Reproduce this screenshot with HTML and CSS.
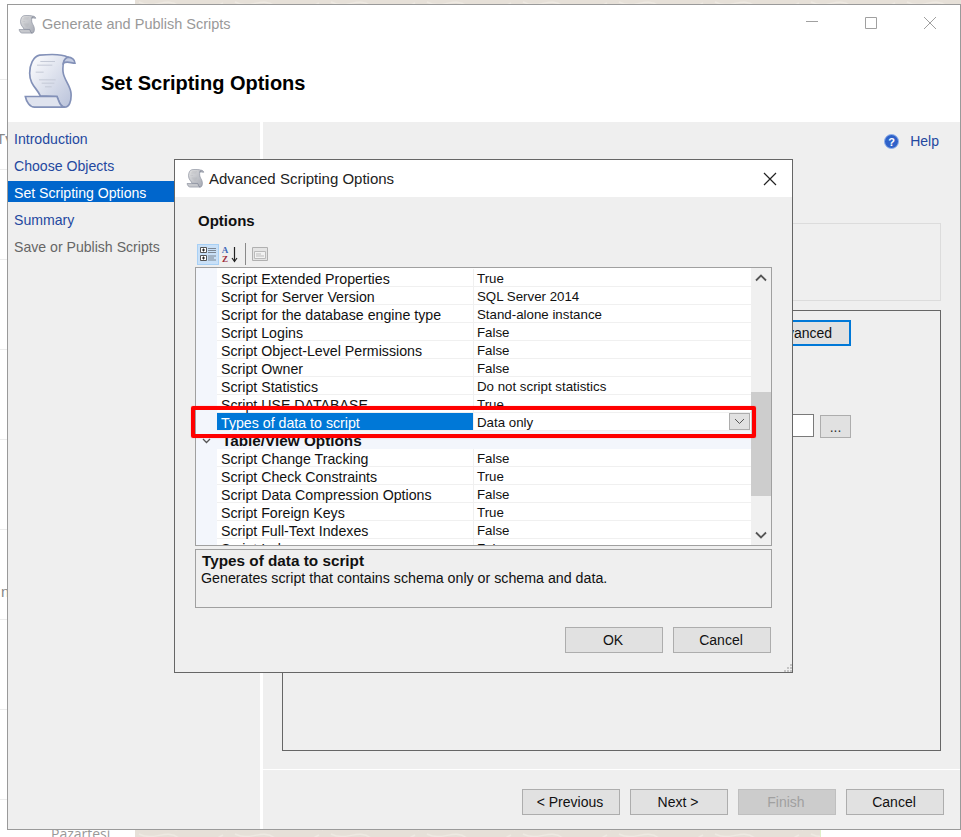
FILE: index.html
```html
<!DOCTYPE html>
<html lang="en">
<head>
    <meta charset="UTF-8">
    <meta name="viewport" content="width=device-width, initial-scale=1.0">
    <title>Generate and Publish Scripts</title>
    <link rel="stylesheet" href="styles.css">
</head>
<body>
    <svg class="defs" width="0" height="0">
        <defs>
            <linearGradient id="paper" x1="0" y1="0" x2="1" y2="1">
                <stop offset="0" stop-color="#ffffff"/>
                <stop offset="1" stop-color="#b9c2da"/>
            </linearGradient>
            <symbol id="scroll" viewBox="70 70 165 170">
                <path d="M120 76C160 72 190 74 205 82C192 88 188 100 190 125C192 150 212 165 214 190C216 215 208 232 195 232C180 232 178 215 172 200L122 198C112 175 90 165 90 130C90 105 100 80 120 76Z" fill="url(#paper)" stroke="#8391b8" stroke-width="5"/>
                <path d="M205 82C216 82 226 90 226 100C214 100 202 92 191 100C192 90 197 85 205 82Z" fill="#c5cde2" stroke="#8391b8" stroke-width="5"/>
                <path d="M77 200L172 200C178 215 182 232 195 232L105 232C90 232 80 215 77 200Z" fill="#dfe3ee" stroke="#8391b8" stroke-width="5"/>
                <path d="M122 95H166M112 106H158M108 127H132M118 150H168M126 160H164M136 171H156" fill="none" stroke="#c4c9d6" stroke-width="3"/>
            </symbol>
            <pattern id="wallpaper" width="96" height="64" patternUnits="userSpaceOnUse">
                <path d="M4 2C20 10 30 -4 44 6S70 14 88 3M10 60C24 52 38 68 52 58S78 50 92 62" fill="none" stroke="#eee9e2" stroke-width="1.500"/>
            </pattern>
        </defs>
    </svg>

    <!-- bits of the web page behind the wizard -->
    <svg class="behind-pattern" width="826" height="837"><rect width="826" height="837" fill="url(#wallpaper)"/></svg>
    <span class="behind behind-tv">Tv</span>
    <span class="behind behind-n">n</span>
    <span class="behind behind-day">Pazartesi</span>
    <div class="behind-corner"></div>

    <div class="wizard">
        <div class="wizard-header">
            <div class="titlebar">
                <svg class="icon-small"><use href="#scroll"/></svg>
                <span class="titlebar-text">Generate and Publish Scripts</span>
                <div class="window-controls">
                    <svg width="14" height="14" viewBox="0 0 14 14"><path d="M1 5.500H13" stroke="#a0a0a0" fill="none"/></svg>
                    <svg width="14" height="14" viewBox="0 0 14 14"><path d="M1.500 1.500H12.500V12.500H1.500Z" stroke="#a0a0a0" fill="none"/></svg>
                    <svg width="14" height="14" viewBox="0 0 14 14"><path d="M1 1L13 13M13 1L1 13" stroke="#a0a0a0" fill="none"/></svg>
                </div>
            </div>
            <div class="banner">
                <svg class="icon-large"><use href="#scroll"/></svg>
                <h1>Set Scripting Options</h1>
            </div>
        </div>

        <div class="wizard-body">
            <ul class="steps">
                <li>Introduction</li>
                <li>Choose Objects</li>
                <li class="step-active">Set Scripting Options</li>
                <li>Summary</li>
                <li class="step-disabled">Save or Publish Scripts</li>
            </ul>

            <div class="page">
                <div class="help-row">
                    <svg width="15" height="15" viewBox="0 0 15 15">
                        <circle cx="7.500" cy="7.500" r="7" fill="#2f62c9" stroke="#8fb0ea"/>
                        <text x="7.500" y="11.500" class="help-mark">?</text>
                    </svg>
                    <span>Help</span>
                </div>
                <div class="summary-box"></div>
                <div class="group-box">
                    <button class="btn btn-focus">Advanced</button>
                    <div class="file-row">
                        <div class="file-input"></div>
                        <button class="btn-browse">...</button>
                    </div>
                </div>
                <div class="wizard-footer">
                    <button class="btn">&lt; Previous</button>
                    <button class="btn">Next &gt;</button>
                    <button class="btn btn-disabled">Finish</button>
                    <button class="btn">Cancel</button>
                </div>
            </div>
        </div>
    </div>

    <div class="dialog">
        <div class="dialog-title">
            <svg class="icon-small"><use href="#scroll"/></svg>
            <span>Advanced Scripting Options</span>
            <svg class="dialog-close" width="14" height="14" viewBox="0 0 14 14"><path d="M1 1L13 13M13 1L1 13" stroke="#222" stroke-width="1.200" fill="none"/></svg>
        </div>
        <div class="dialog-body">
            <h2>Options</h2>
            <div class="toolbar">
                <div class="tool tool-on">
                    <svg width="18" height="18" viewBox="0 0 18 18">
                        <path d="M1.500 2.500H7.500V7.500H1.500ZM1.500 10.500H7.500V15.500H1.500Z" fill="#fff" stroke="#555"/>
                        <path d="M3 5H6M4.500 3.500V6.500M3 13H6M4.500 11.500V14.500" stroke="#222"/>
                        <path d="M9 3.500H17M9 5.500H17M9 7.500H17M9 11H17M9 13H15M9 15H17" stroke="#7d8794"/>
                    </svg>
                </div>
                <svg class="tool-az" width="20" height="20" viewBox="0 0 20 20">
                    <text x="5" y="9" class="az az-a">A</text>
                    <text x="5" y="18" class="az az-z">Z</text>
                    <path d="M14.500 3V17M12 14L14.500 17.500L17 14" stroke="#222" stroke-width="1.200" fill="none"/>
                </svg>
                <div class="tool-sep"></div>
                <svg class="tool-pages" width="16" height="16" viewBox="0 0 16 16">
                    <path d="M.5 1.500H15.500V14.500H.5Z" fill="#e4e4e4" stroke="#b0b0b0"/>
                    <path d="M2.500 5.500H13.500V12.500H2.500Z" fill="#f2f2f2" stroke="#bbb"/>
                    <path d="M4 8H9M4 10H12" stroke="#bbb"/>
                </svg>
            </div>

            <div class="prop-grid">
                <div class="prop-rows">
                    <div class="prop-row"><span class="prop-name">Script Extended Properties</span><span class="prop-value">True</span></div>
                    <div class="prop-row"><span class="prop-name">Script for Server Version</span><span class="prop-value">SQL Server 2014</span></div>
                    <div class="prop-row"><span class="prop-name">Script for the database engine type</span><span class="prop-value">Stand-alone instance</span></div>
                    <div class="prop-row"><span class="prop-name">Script Logins</span><span class="prop-value">False</span></div>
                    <div class="prop-row"><span class="prop-name">Script Object-Level Permissions</span><span class="prop-value">False</span></div>
                    <div class="prop-row"><span class="prop-name">Script Owner</span><span class="prop-value">False</span></div>
                    <div class="prop-row"><span class="prop-name">Script Statistics</span><span class="prop-value">Do not script statistics</span></div>
                    <div class="prop-row"><span class="prop-name">Script USE DATABASE</span><span class="prop-value">True</span></div>
                    <div class="prop-row prop-selected">
                        <span class="prop-name">Types of data to script</span>
                        <span class="prop-value">Data only</span>
                        <span class="prop-drop">
                            <svg width="11" height="7" viewBox="0 0 11 7"><path d="M1 1L5.500 5.500L10 1" stroke="#555" fill="none"/></svg>
                        </span>
                    </div>
                    <div class="prop-category">
                        <svg width="9" height="6" viewBox="0 0 9 6"><path d="M1 1L4.500 4.500L8 1" stroke="#555" stroke-width="1.300" fill="none"/></svg>
                        <span>Table/View Options</span>
                    </div>
                    <div class="prop-row"><span class="prop-name">Script Change Tracking</span><span class="prop-value">False</span></div>
                    <div class="prop-row"><span class="prop-name">Script Check Constraints</span><span class="prop-value">True</span></div>
                    <div class="prop-row"><span class="prop-name">Script Data Compression Options</span><span class="prop-value">False</span></div>
                    <div class="prop-row"><span class="prop-name">Script Foreign Keys</span><span class="prop-value">True</span></div>
                    <div class="prop-row"><span class="prop-name">Script Full-Text Indexes</span><span class="prop-value">False</span></div>
                    <div class="prop-row"><span class="prop-name">Script Indexes</span><span class="prop-value">False</span></div>
                </div>
                <div class="scrollbar">
                    <svg width="12" height="8" viewBox="0 0 12 8"><path d="M1 6.500L6 1.500L11 6.500" stroke="#555" stroke-width="1.800" fill="none"/></svg>
                    <div class="scroll-track"><div class="scroll-thumb"></div></div>
                    <svg width="12" height="8" viewBox="0 0 12 8"><path d="M1 1.500L6 6.500L11 1.500" stroke="#555" stroke-width="1.800" fill="none"/></svg>
                </div>
            </div>

            <div class="prop-desc">
                <strong>Types of data to script</strong>
                <span>Generates script that contains schema only or schema and data.</span>
            </div>

            <div class="dialog-buttons">
                <button class="btn">OK</button>
                <button class="btn">Cancel</button>
            </div>
        </div>
        <svg class="grip" width="8" height="8" viewBox="0 0 8 8"><path d="M6 0H8V2H6ZM3 3H5V5H3ZM6 3H8V5H6ZM0 6H2V8H0ZM3 6H5V8H3ZM6 6H8V8H6Z" fill="#c4c4c4"/></svg>
    </div>

    <!-- red marker drawn on top of the screenshot -->
    <div class="marker"></div>
</body>
</html>
```

FILE: styles.css
```css
html, body {
    margin: 0;
    height: 100%;
}

body {
    position: relative;
    width: 961px;
    height: 837px;
    overflow: hidden;
    font-family: "Liberation Sans", Arial, sans-serif;
    font-size: 14px;
    color: #111;
    background-color: #e6e0d8;
    background-image:
        repeating-linear-gradient(to bottom, transparent 0, transparent 79px, #ececec 79px, #ececec 80px, transparent 80px, transparent 90px),
        linear-gradient(#fff, #fff);
    background-size: 135px 100%;
    background-repeat: no-repeat;
}

.defs {
    position: absolute;
}

.behind-pattern {
    position: absolute;
    left: 135px;
    top: 0;
}

.behind {
    position: absolute;
    color: #888;
    font-size: 15px;
    line-height: 18px;
}

.behind-tv {
    left: -4px;
    top: 130px;
}

.behind-n {
    left: 1px;
    top: 583px;
}

.behind-day {
    left: 51px;
    top: 825px;
    color: #999;
    font-family: "Open Sans", sans-serif;
    font-size: 14px;
}

.behind-corner {
    position: absolute;
    left: 820px;
    top: 829px;
    width: 141px;
    height: 8px;
    background-color: #fff;
    border-left: 1px solid #dff0c8;
}

.wizard {
    position: absolute;
    left: 7px;
    top: 4px;
    width: 954px;
    height: 826px;
    box-sizing: border-box;
    display: flex;
    flex-direction: column;
    border: 1px solid #9a9a9a;
    background-color: #efefef;
}

.wizard-header {
    height: 117px;
    background-color: #fff;
    flex: none;
}

.titlebar {
    display: flex;
    align-items: center;
    height: 38px;
    padding-left: 10px;
}

.icon-small {
    width: 19px;
    height: 19px;
    flex: none;
    filter: saturate(0.5) brightness(0.88);
}

.titlebar-text {
    margin-left: 5px;
    color: #999;
    font-size: 14.500px;
}

.window-controls {
    display: flex;
    gap: 45px;
    margin-left: auto;
    margin-right: 23px;
    margin-bottom: 2px;
}

.banner {
    display: flex;
    align-items: center;
    height: 79px;
    padding-left: 15px;
}

.icon-large {
    width: 55px;
    height: 57px;
    flex: none;
    margin-top: -2px;
}

.banner h1 {
    margin: 1px 0 0 23px;
    font-size: 20px;
    color: #000;
}

.wizard-body {
    display: flex;
    flex: 1;
    min-height: 0;
}

.steps {
    flex: none;
    width: 252px;
    margin: 0;
    padding: 5px 0 0;
    list-style: none;
    display: flex;
    flex-direction: column;
    gap: 6px;
}

.steps li {
    height: 21px;
    line-height: 25px;
    padding-left: 6px;
    font-size: 14.100px;
    color: #24489f;
}

.steps .step-active {
    background-color: #0066cc;
    color: #fff;
}

.steps .step-disabled {
    color: #666;
}

.page {
    flex: 1;
    display: flex;
    flex-direction: column;
    border-left: 3px solid #fff;
}

.help-row {
    display: flex;
    align-items: center;
    justify-content: flex-end;
    gap: 11px;
    height: 38px;
    padding-right: 21px;
    color: #24489f;
}

.help-mark {
    font-size: 11px;
    font-weight: bold;
    fill: #fff;
    text-anchor: middle;
}

.summary-box {
    height: 78px;
    margin: 63px 19px 0 19px;
    box-sizing: border-box;
    border: 1px solid #dcdcdc;
}

.group-box {
    height: 441px;
    margin: 9px 19px 0 19px;
    box-sizing: border-box;
    border: 1px solid #666;
    display: flex;
    flex-direction: column;
    align-items: flex-end;
    padding: 9px 89px 0 0;
}

.btn {
    width: 98px;
    height: 26px;
    padding: 0 2px 0 0;
    box-sizing: border-box;
    border: 1px solid #adadad;
    background-color: #e1e1e1;
    color: #111;
    font-family: inherit;
    font-size: 14px;
}

.btn-focus {
    width: 100px;
    padding: 0;
    border: 2px solid #0078d7;
}

.btn-disabled {
    background-color: #ccc;
    border-color: #bfbfbf;
    color: #a0a0a0;
}

.file-row {
    display: flex;
    align-items: flex-start;
    gap: 6px;
    margin-top: 68px;
}

.file-input {
    width: 200px;
    height: 23px;
    box-sizing: border-box;
    background-color: #fff;
    border: 1px solid #7a7a7a;
}

.btn-browse {
    width: 31px;
    height: 23px;
    margin-top: 1px;
    padding: 0;
    border: 1px solid #adadad;
    background-color: #e1e1e1;
    color: #333;
    font-family: inherit;
    font-size: 14px;
}

.wizard-footer {
    display: flex;
    justify-content: flex-end;
    gap: 10px;
    margin-top: 18px;
    padding: 19px 16px 0 0;
    border-top: 1px solid #fff;
}

.dialog {
    position: absolute;
    left: 174px;
    top: 159px;
    width: 619px;
    height: 514px;
    box-sizing: border-box;
    display: flex;
    flex-direction: column;
    border: 1px solid #666;
    background-color: #efefef;
}

.dialog-title {
    display: flex;
    align-items: center;
    gap: 4px;
    height: 37px;
    padding: 0 15px 0 11px;
    background-color: #fff;
    font-size: 15px;
    color: #222;
}

.dialog-close {
    margin-left: auto;
}

.dialog-body {
    flex: 1;
    padding: 0 20px;
}

.dialog-body h2 {
    margin: 15px 0 0 3px;
    font-size: 15px;
    line-height: 17px;
    color: #111;
}

.toolbar {
    display: flex;
    align-items: center;
    height: 22px;
    margin: 14px 0 2px 2px;
}

.tool-on {
    display: flex;
    align-items: center;
    justify-content: center;
    width: 22px;
    height: 21px;
    box-sizing: border-box;
    background-color: #c9e0f7;
    border: 1px solid #a8d0f5;
}

.tool-az {
    margin-left: 1px;
}

.az {
    font-family: "Liberation Serif", serif;
    font-size: 9px;
    font-weight: bold;
    text-anchor: middle;
}

.az-a {
    fill: #3b66b8;
}

.az-z {
    fill: #9c2b3a;
}

.tool-sep {
    width: 1px;
    height: 22px;
    margin: 0 6px 0 5px;
    background-color: #8a8a8a;
}

.prop-grid {
    display: flex;
    height: 279px;
    box-sizing: border-box;
    border: 1px solid #a0a0a0;
    background-color: #fff;
}

.prop-rows {
    flex: 1;
    height: 277px;
    padding-top: 1px;
    box-sizing: border-box;
    overflow: hidden;
    background-image: linear-gradient(#f3f6fc, #f3f6fc);
    background-size: 21px 100%;
    background-repeat: no-repeat;
}

.prop-row {
    position: relative;
    display: flex;
    height: 18px;
    box-sizing: border-box;
    margin-left: 21px;
    border-bottom: 1px solid #f0f0f0;
    line-height: 17px;
    font-size: 13.300px;
}

.prop-name {
    width: 257px;
    box-sizing: border-box;
    padding: 2px 0 0 4px;
    border-right: 1px solid #f0f0f0;
    font-size: 14.200px;
    white-space: nowrap;
}

.prop-value {
    padding: 1px 0 0 3px;
    white-space: nowrap;
}

.prop-selected .prop-name {
    background-color: #0078d7;
    color: #fff;
}

.prop-drop {
    display: flex;
    align-items: center;
    justify-content: center;
    width: 21px;
    height: 17px;
    margin: 0 1px 0 auto;
    box-sizing: border-box;
    border: 1px solid #adadad;
    background-color: #e1e1e1;
}

.prop-category {
    display: flex;
    align-items: center;
    height: 18px;
    padding: 1px 0 0 6px;
    box-sizing: border-box;
    background-color: #f3f6fc;
    font-size: 15.300px;
    font-weight: bold;
}

.prop-category span {
    margin-left: 11px;
}

.scrollbar {
    flex: none;
    width: 20px;
    display: flex;
    flex-direction: column;
    align-items: center;
    justify-content: space-between;
    padding: 6px 0;
    box-sizing: border-box;
    background-color: #f0f0f0;
}

.scroll-track {
    flex: 1;
    align-self: stretch;
    padding-top: 110px;
}

.scroll-thumb {
    height: 104px;
    background-color: #cdcdcd;
}

.prop-desc {
    display: flex;
    flex-direction: column;
    height: 59px;
    margin-top: 3px;
    padding: 2px 6px 0;
    box-sizing: border-box;
    border: 1px solid #a0a0a0;
    font-size: 14.230px;
    line-height: 17px;
}

.prop-desc strong {
    font-size: 15.300px;
}

.prop-desc span {
    margin: 1px 0 0 -1px;
}

.dialog-buttons {
    display: flex;
    justify-content: flex-end;
    gap: 10px;
    margin-top: 19px;
    padding-right: 1px;
}

.grip {
    position: absolute;
    right: 0;
    bottom: 0;
}

.marker {
    position: absolute;
    left: 191px;
    top: 406px;
    width: 565px;
    height: 32px;
    box-sizing: border-box;
    border: 4px solid #f00;
    border-radius: 2px;
    box-shadow: 0 0 1px rgba(255, 0, 0, 0.6);
}
```
